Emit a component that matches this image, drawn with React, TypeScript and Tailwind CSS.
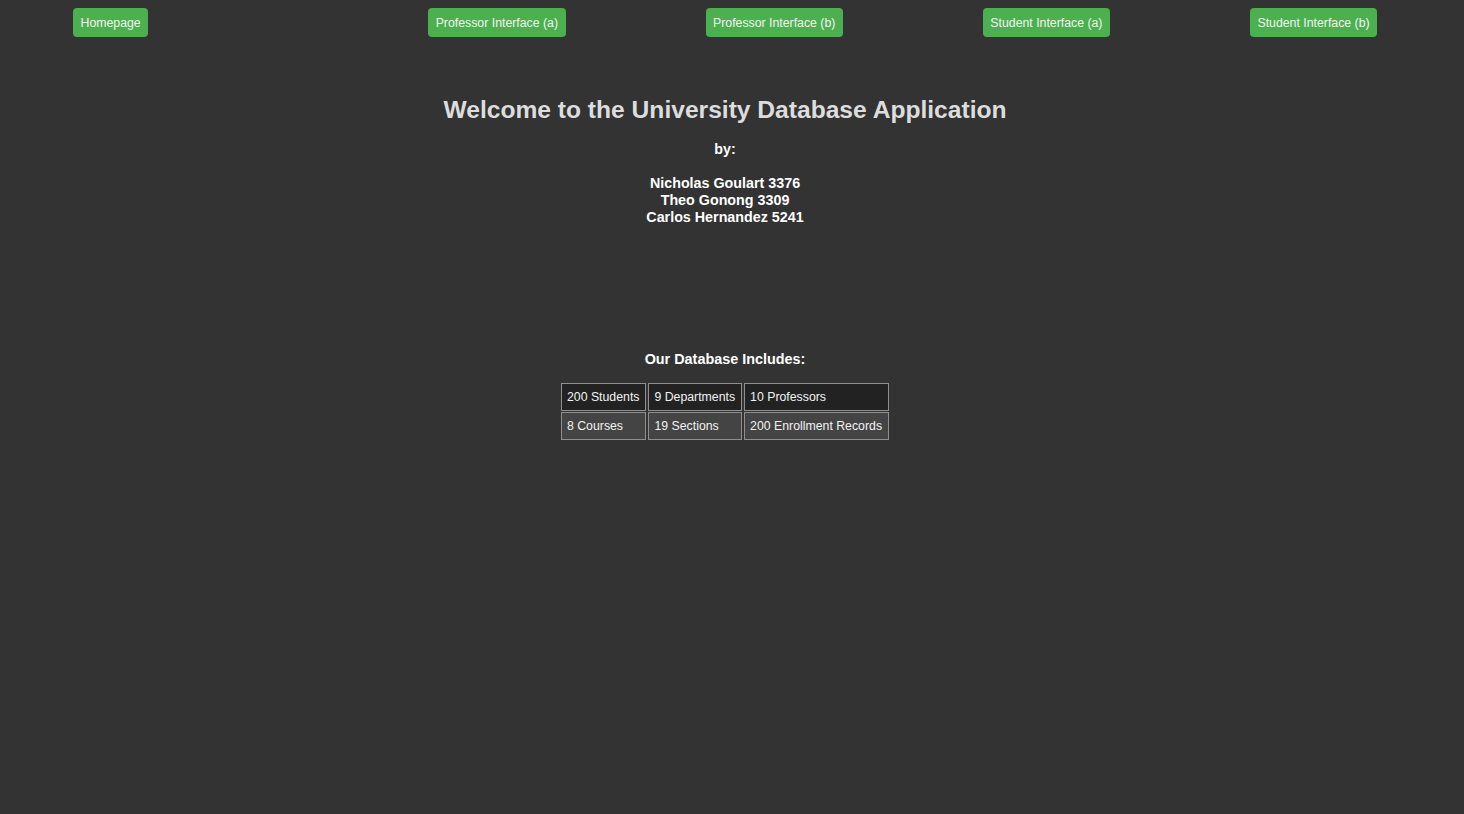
import React from 'react';

const navLinks = [
  'Professor Interface (a)',
  'Professor Interface (b)',
  'Student Interface (a)',
  'Student Interface (b)',
];

const stats = [
  ['200 Students', '9 Departments', '10 Professors'],
  ['8 Courses', '19 Sections', '200 Enrollment Records'],
];

const App: React.FC = () => {
  return (
    <div className="min-h-screen bg-[#333333] text-white font-['Liberation_Sans',Arial,sans-serif]">
      {/* Top navigation */}
      <nav className="flex items-start pt-[8px] pl-[73px] gap-[140px]">
        <button className="h-[29px] pt-[1px] px-[7.5px] mr-[140px] bg-[#4caf50] text-[#f4f4f4] text-[12.3px] rounded-[4px]">
          Homepage
        </button>
        {navLinks.map((label) => (
          <button
            key={label}
            className="h-[29px] pt-[1px] px-[7.5px] bg-[#4caf50] text-[#f4f4f4] text-[12.3px] rounded-[4px]"
          >
            {label}
          </button>
        ))}
      </nav>

      {/* Main content */}
      <main className="w-[1450px] flex flex-col items-center text-center">
        <h1 className="mt-[59px] text-[24.6px] leading-[28px] font-bold text-[#dddddd]">
          Welcome to the University Database Application
        </h1>
        <p className="mt-[17px] text-[14.3px] leading-[17px] font-bold">by:</p>
        <div className="mt-[17px] text-[14.3px] leading-[17px] font-bold">
          <div>Nicholas Goulart 3376</div>
          <div>Theo Gonong 3309</div>
          <div>Carlos Hernandez 5241</div>
        </div>

        <h3 className="mt-[125px] text-[14.4px] leading-[17px] font-bold">Our Database Includes:</h3>

        <table className="mt-[14px] border-separate border-spacing-x-[2px] border-spacing-y-[1px] text-[12.3px] leading-[14px] text-left text-[#f2f2f2]">
          <tbody>
            {stats.map((row, i) => (
              <tr key={i} className={i === 0 ? 'bg-[#222222]' : 'bg-[#444444]'}>
                {row.map((cell) => (
                  <td key={cell} className="border border-[#8f8f8f] pl-[5px] pr-[6px] py-[6px]">
                    {cell}
                  </td>
                ))}
              </tr>
            ))}
          </tbody>
        </table>
      </main>
    </div>
  );
};

export default App;
